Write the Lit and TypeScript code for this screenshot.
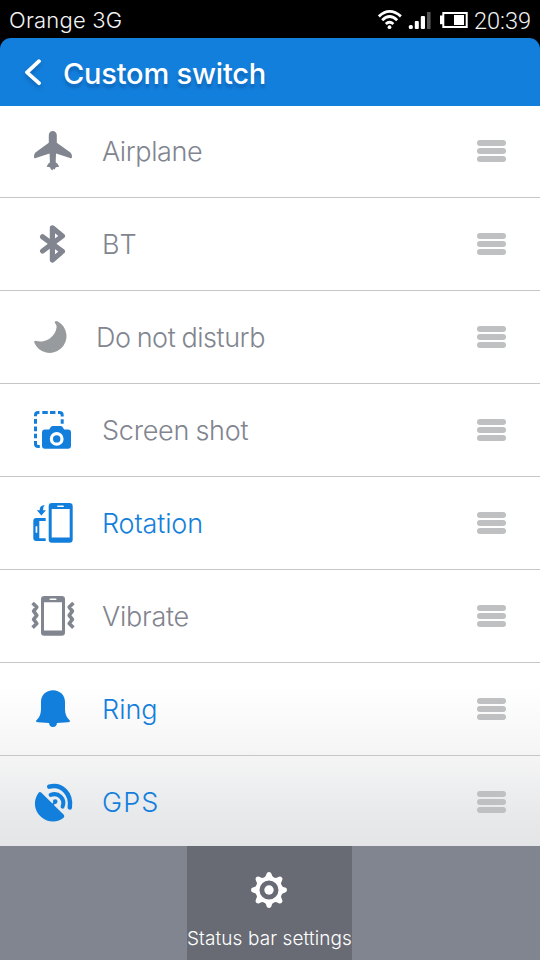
import { LitElement, html, svg, css } from "lit";
import { customElement, property } from "lit/decorators.js";
import { classMap } from "lit/directives/class-map.js";

const icons: Record<string, unknown> = {
  airplane: svg`<path fill="currentColor" d="M22.7 3C25 3 26.8 5 26.8 7.2V14.8L40.4 24.6Q42.2 26.2 42 29.2Q41.8 30.6 40 30L26 25.4L25.7 34.2Q28.8 36.2 29.2 38.8L25.8 39.2L24.6 41.6L22.8 40.8V42.4L21 41.6L20 39.2L16.6 38.8Q17 36.2 19.9 34.2L19.6 25.4L5.8 30Q4.2 30.6 4 29.2Q3.8 26.2 5.4 24.6L18.8 14.8V7.2C18.8 5 20.5 3 22.7 3Z"/>`,
  bt: svg`<path fill="none" stroke="currentColor" stroke-width="5.2" stroke-linecap="round" stroke-linejoin="round" d="M12.6 15.8L32.4 30.4L22.4 39V6.8L32.4 15L12.6 30"/>`,
  moon: svg`<path fill="currentColor" d="M24.6 8.6Q25 6.2 27.8 7.4A16.8 16.8 0 1 1 4.2 28.6Q4 26.4 6.4 27A16.4 16.4 0 0 0 26.6 13.4Q26.6 10.6 24.6 8.6Z"/>`,
  shot: svg`<g fill="none" stroke="currentColor" stroke-width="3"><path d="M5.5 9.2V8.2Q5.5 5.5 8.2 5.5H9.4M12.3 5.5H17.8M20 5.5H25.4M28 5.5H29.6Q32.2 5.5 32.2 8.2V9.4M32.2 12.2V16.8M5.5 12V16.8M5.5 19.4V24.2M5.5 26.8V31.2M5.5 34V36.8Q5.5 39.6 8.2 39.6H9.8"/></g><path fill="currentColor" d="M15 22.4H19.2L21 19.8Q21.6 19 22.8 19H30.6Q31.8 19 32.4 19.8L34.2 22.4H38Q41 22.4 41 25.4V38.7Q41 41.7 38 41.7H15Q12 41.7 12 38.7V25.4Q12 22.4 15 22.4Z"/><circle cx="26.7" cy="31.9" r="5.3" fill="none" stroke="#fff" stroke-width="3.2"/>`,
  rotation: svg`<path fill="currentColor" fill-rule="evenodd" d="M22 3H39.4Q42.7 3 42.7 6.3V39.4Q42.7 42.7 39.4 42.7H22Q18.7 42.7 18.7 39.4V6.3Q18.7 3 22 3ZM21.7 9V37.4H39.7V9ZM28 5.5Q27 5.5 27 6.3T28 7.1H33Q34 7.1 34 6.3T33 5.5Z"/><path fill="currentColor" fill-rule="evenodd" d="M6.2 18H15.7V21H9.3V38.3H15.7V41H6.2Q3.3 41 3.3 38V21Q3.3 18 6.2 18ZM5.6 26.2V32.8H7.3V26.2ZM14.8 5.1Q12.8 7 13.2 10.3H16L11.4 15.4L6.8 10.3H9.7Q9.6 5.4 14.8 5.1Z"/>`,
  vibrate: svg`<path fill="currentColor" fill-rule="evenodd" d="M14.3 3H31.7Q35 3 35 6.3V39.4Q35 42.7 31.7 42.7H14.3Q11 42.7 11 39.4V6.3Q11 3 14.3 3ZM14 9.2V37.4H32V9.2ZM20.4 5.5Q19.4 5.5 19.4 6.3T20.4 7.1H25.6Q26.6 7.1 26.6 6.3T25.6 5.5Z"/><path fill="none" stroke="currentColor" stroke-width="3.6" stroke-linejoin="round" d="M2.6 10L6.8 14.1L3.6 18.2L6.8 22.3L3.6 26.4L6.8 30.5L2.6 34.6M43.4 10L39.2 14.1L42.4 18.2L39.2 22.3L42.4 26.4L39.2 30.5L43.4 34.6"/>`,
  ring: svg`<path fill="currentColor" d="M23 4.2C30 4.2 35 9.2 35 16V23.5Q35.2 30.8 39.8 34.4Q40.6 36 38 36.2L27 36.9Q26.6 41 23 41T19 36.9L8 36.2Q5.4 36 6.2 34.4Q10.8 30.8 11 23.5V16C11 9.2 16 4.2 23 4.2Z"/>`,
  gps: svg`<path fill="currentColor" d="M8.8 13.4Q10 12.4 11.2 13.6L22.4 24.6L24.6 22.4L26 23.8L23.8 26L33.8 35.8Q35 37.4 33.6 38.8C28.8 43 18.5 44.6 11.2 38C3.2 31 3.4 20 8.8 13.4Z"/><circle cx="25.2" cy="22.6" r="2.3" fill="currentColor"/><g fill="none" stroke="currentColor" stroke-linecap="round"><path stroke-width="4" d="M20.6 15.9C28.6 13 35.5 19.8 32.6 27.6"/><path stroke-width="4.5" d="M19.2 7.6C31.6 4.2 41.8 14.8 39.8 28.4"/></g>`,
};

interface Switch { icon: string; label: string; on?: boolean; }

const switches: Switch[] = [
  { icon: "airplane", label: "Airplane" },
  { icon: "bt", label: "BT" },
  { icon: "moon", label: "Do not disturb" },
  { icon: "shot", label: "Screen shot" },
  { icon: "rotation", label: "Rotation", on: true },
  { icon: "vibrate", label: "Vibrate" },
  { icon: "ring", label: "Ring", on: true },
  { icon: "gps", label: "GPS", on: true },
];

@customElement("switch-row")
class SwitchRow extends LitElement {
  @property({ attribute: false }) item!: Switch;

  static styles = css`
    :host { display: block; flex: none; }
    .row {
      display: flex; align-items: center; box-sizing: border-box; height: 93px;
      padding: 0 34px 0 30px; border-bottom: 1px solid #c5c6c8; color: #81858f;
    }
    .icon { width: 46px; height: 46px; flex: none; }
    .moon .icon { color: #989b9e; }
    .shot .icon, .on { color: #137fdc; }
    .label {
      flex: 1; margin-left: 26px; padding-top: 2px; white-space: nowrap; letter-spacing: -.25px; word-spacing: -1px;
      font: 300 27px/36px Inter, "Liberation Sans", sans-serif;
    }
    .moon .label { margin-left: 20px; letter-spacing: -.45px; }
    .airplane .label { letter-spacing: -.4px; }
    .rotation .label { letter-spacing: -.15px; }
    .bt .label { letter-spacing: 1.4px; }
    .ring .label { letter-spacing: 0; }
    .gps .label { letter-spacing: 1.1px; }
    .handle { display: grid; gap: 2.7px; width: 29px; }
    .bar { height: 5.6px; border-radius: 3px; background: #bfc0c2; }
  `;

  render() {
    const { icon, label, on } = this.item;
    return html`<div class=${classMap({ row: true, on: !!on, [icon]: true })}>
      <svg class="icon" viewBox="0 0 46 46">${icons[icon]}</svg>
      <span class="label">${label}</span>
      <div class="handle"><div class="bar"></div><div class="bar"></div><div class="bar"></div></div>
    </div>`;
  }
}

@customElement("app-root")
class AppRoot extends LitElement {
  static styles = css`
    :host {
      display: flex; flex-direction: column; width: 540px; height: 960px; overflow: hidden;
      background: #000; font-family: Inter, "Liberation Sans", sans-serif;
    }
    .status {
      flex: none; display: flex; align-items: center; box-sizing: border-box; height: 38px;
      padding: 3px 9px 0 9px; color: #f4f4f4;
    }
    .carrier { flex: 1; font-size: 22px; font-weight: 300; line-height: 30px; letter-spacing: .2px; margin-top: -2px; }
    .signals { width: 92px; height: 24px; margin: -1px 4px 0 0; }
    .time { font: 300 23.5px/30px Roboto, sans-serif; margin-top: 1px; }
    .header {
      flex: none; display: flex; align-items: center; height: 68px; z-index: 1;
      padding-left: 22px; background: #137fdc; border-radius: 11px 11px 0 0; color: #fff;
    }
    .back { width: 22px; height: 36px; filter: drop-shadow(0 3px 2px rgba(0, 40, 90, .3)); }
    .title { margin-left: 19px; padding-top: 3px; font-size: 29px; font-weight: 450; line-height: 38px; letter-spacing: -.2px; text-shadow: 0 4px 3px rgba(0, 50, 110, .3); }
    .list {
      flex: 1; min-height: 0; margin-top: -1px; overflow: hidden; display: flex; flex-direction: column;
      background: linear-gradient(#fff 580px, #f4f4f4 655px, #e7e9eb 710px, #e3e5e7 100%);
    }
    .footer { flex: none; display: flex; justify-content: center; height: 114px; background: #81858f; }
    .tab {
      display: flex; flex-direction: column; align-items: center; width: 165px; margin-right: 1px;
      background: #686b74; color: #fff;
    }
    .gear { width: 40px; height: 40px; margin: 24px 1px 0 0; }
    .caption { margin-top: 16px; font-size: 19px; font-weight: 300; line-height: 26px; letter-spacing: .1px; white-space: nowrap; }
  `;

  render() {
    return html`
      <div class="status">
        <span class="carrier">Orange 3G</span>
        <svg class="signals" viewBox="0 0 92 24">
          <g fill="none" stroke="#fff" stroke-width="2.8">
            <path d="M0.9 8.4Q11.5 -1.6 22.9 8.4M4.2 12.2Q11.5 5 19.2 12.2M7.8 16Q11.5 12.4 15.4 16"/>
          </g>
          <circle cx="11.5" cy="19.2" r="1.9" fill="#fff"/>
          <g fill="#fff">
            <rect x="30.8" y="17" width="4" height="4" rx="1.5"/><rect x="36.8" y="13" width="4" height="8" rx="1"/>
            <rect x="42.8" y="8" width="4.2" height="13" rx="1"/>
            <rect x="49" y="4" width="3.6" height="17" fill="#555"/>
            <rect x="62" y="7.5" width="3" height="8.7"/><rect x="76" y="7" width="10" height="10"/>
          </g>
          <rect x="65.3" y="5" width="23.4" height="14" fill="none" stroke="#fff" stroke-width="2"/>
        </svg>
        <span class="time">20:39</span>
      </div>
      <div class="header">
        <svg class="back" viewBox="0 0 22 36"><path fill="none" stroke="#fff" stroke-width="3.8" stroke-linecap="round" stroke-linejoin="round" d="M17 7.2L5 18.4L17 29.2"/></svg>
        <span class="title">Custom switch</span>
      </div>
      <div class="list">${switches.map((s) => html`<switch-row .item=${s}></switch-row>`)}</div>
      <div class="footer">
        <div class="tab">
          <svg class="gear" viewBox="-20 -20 40 40">
            ${[0, 45, 90, 135, 180, 225, 270, 315].map((a) => svg`<path fill="#fff" transform="rotate(${a})" d="M-5.5 -11.5Q-3 -13.4 -2.4 -16.2Q-2 -18 0 -18T2.4 -16.2Q3 -13.4 5.5 -11.5Z"/>`)}
            <circle r="11.5" fill="none" stroke="#fff" stroke-width="4"/>
            <circle r="4.7" fill="#fff"/>
          </svg>
          <span class="caption">Status bar settings</span>
        </div>
      </div>`;
  }
}
